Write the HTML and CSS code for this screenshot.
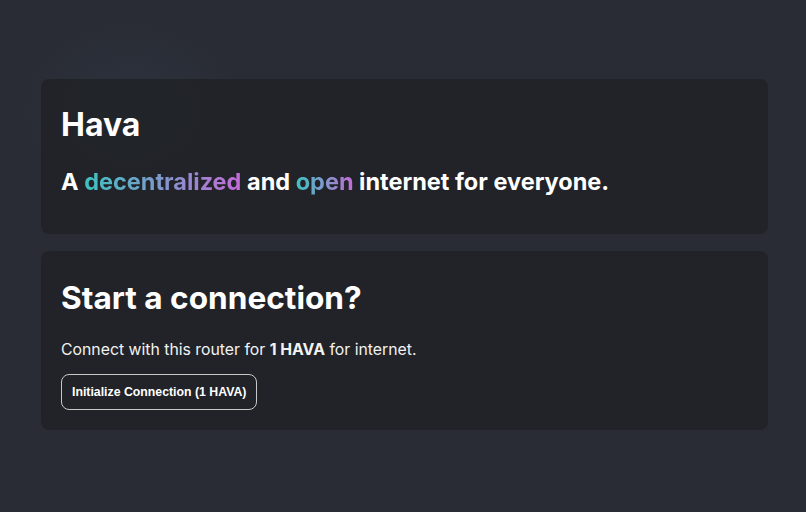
FILE: index.html
```html
<!DOCTYPE html>
<html lang="en">
<head>
  <meta charset="UTF-8">
  <title>Hava</title>
  <link rel="stylesheet" href="styles.css">
</head>
<body>
  <div class="glow"></div>
  <div class="main">
    <div class="card hero">
      <h1>Hava</h1>
      <h2>A <span class="grad">decentralized</span> and <span class="grad">open</span> internet for everyone.</h2>
    </div>

    <div class="card connect">
      <h3>Start a connection?</h3>
      <p>Connect with this router for <strong>1 HAVA</strong> for internet.</p>
      <button class="connect-button">Initialize Connection (1 HAVA)</button>
    </div>
  </div>
</body>
</html>
```

FILE: styles.css
```css
html, body {
  margin: 0;
  height: 100%;
}
body {
  font-family: Inter, "Noto Sans", sans-serif;
  background-color: #292c35;
  color: #fff;
  position: relative;
  overflow: hidden;
}
.glow {
  position: absolute;
  left: 20px;
  top: 20px;
  width: 220px;
  height: 180px;
  background: radial-gradient(closest-side, rgba(60,80,100,0.18), rgba(60,80,100,0));
  pointer-events: none;
}
.main {
  position: relative;
  padding: 79px 38px 0 41px;
  display: flex;
  flex-direction: column;
  gap: 17px;
}
.card {
  background-color: rgba(33,35,40,0.96);
  border-radius: 8px;
  padding: 20px 20px;
}
.hero {
  height: 115px;
}
h1 {
  font-size: 32px;
  font-weight: 700;
  margin: 6px 0 0;
  line-height: 40px;
}
h2 {
  font-size: 23.5px;
  font-weight: 700;
  margin: 22px 0 0;
  line-height: 30px;
}
.grad {
  background: linear-gradient(90deg, #3ec3c0, #c46bd8);
  -webkit-background-clip: text;
  background-clip: text;
  color: transparent;
}
h3 {
  font-size: 31.6px;
  font-weight: 700;
  margin: 7px 0 0;
  line-height: 40px;
}
p {
  font-size: 15.8px;
  margin: 20px 0 0;
  line-height: 24px;
  color: #f2f2f2;
}
.connect-button {
  margin-top: 12px;
  margin-bottom: 0;
  font-family: "Liberation Sans", Arial, sans-serif;
  font-size: 12.3px;
  font-weight: 700;
  color: #fff;
  background: transparent;
  border: 1px solid #c8c8c8;
  border-radius: 8px;
  padding: 10px 10px;
  height: 36px;
}
```
